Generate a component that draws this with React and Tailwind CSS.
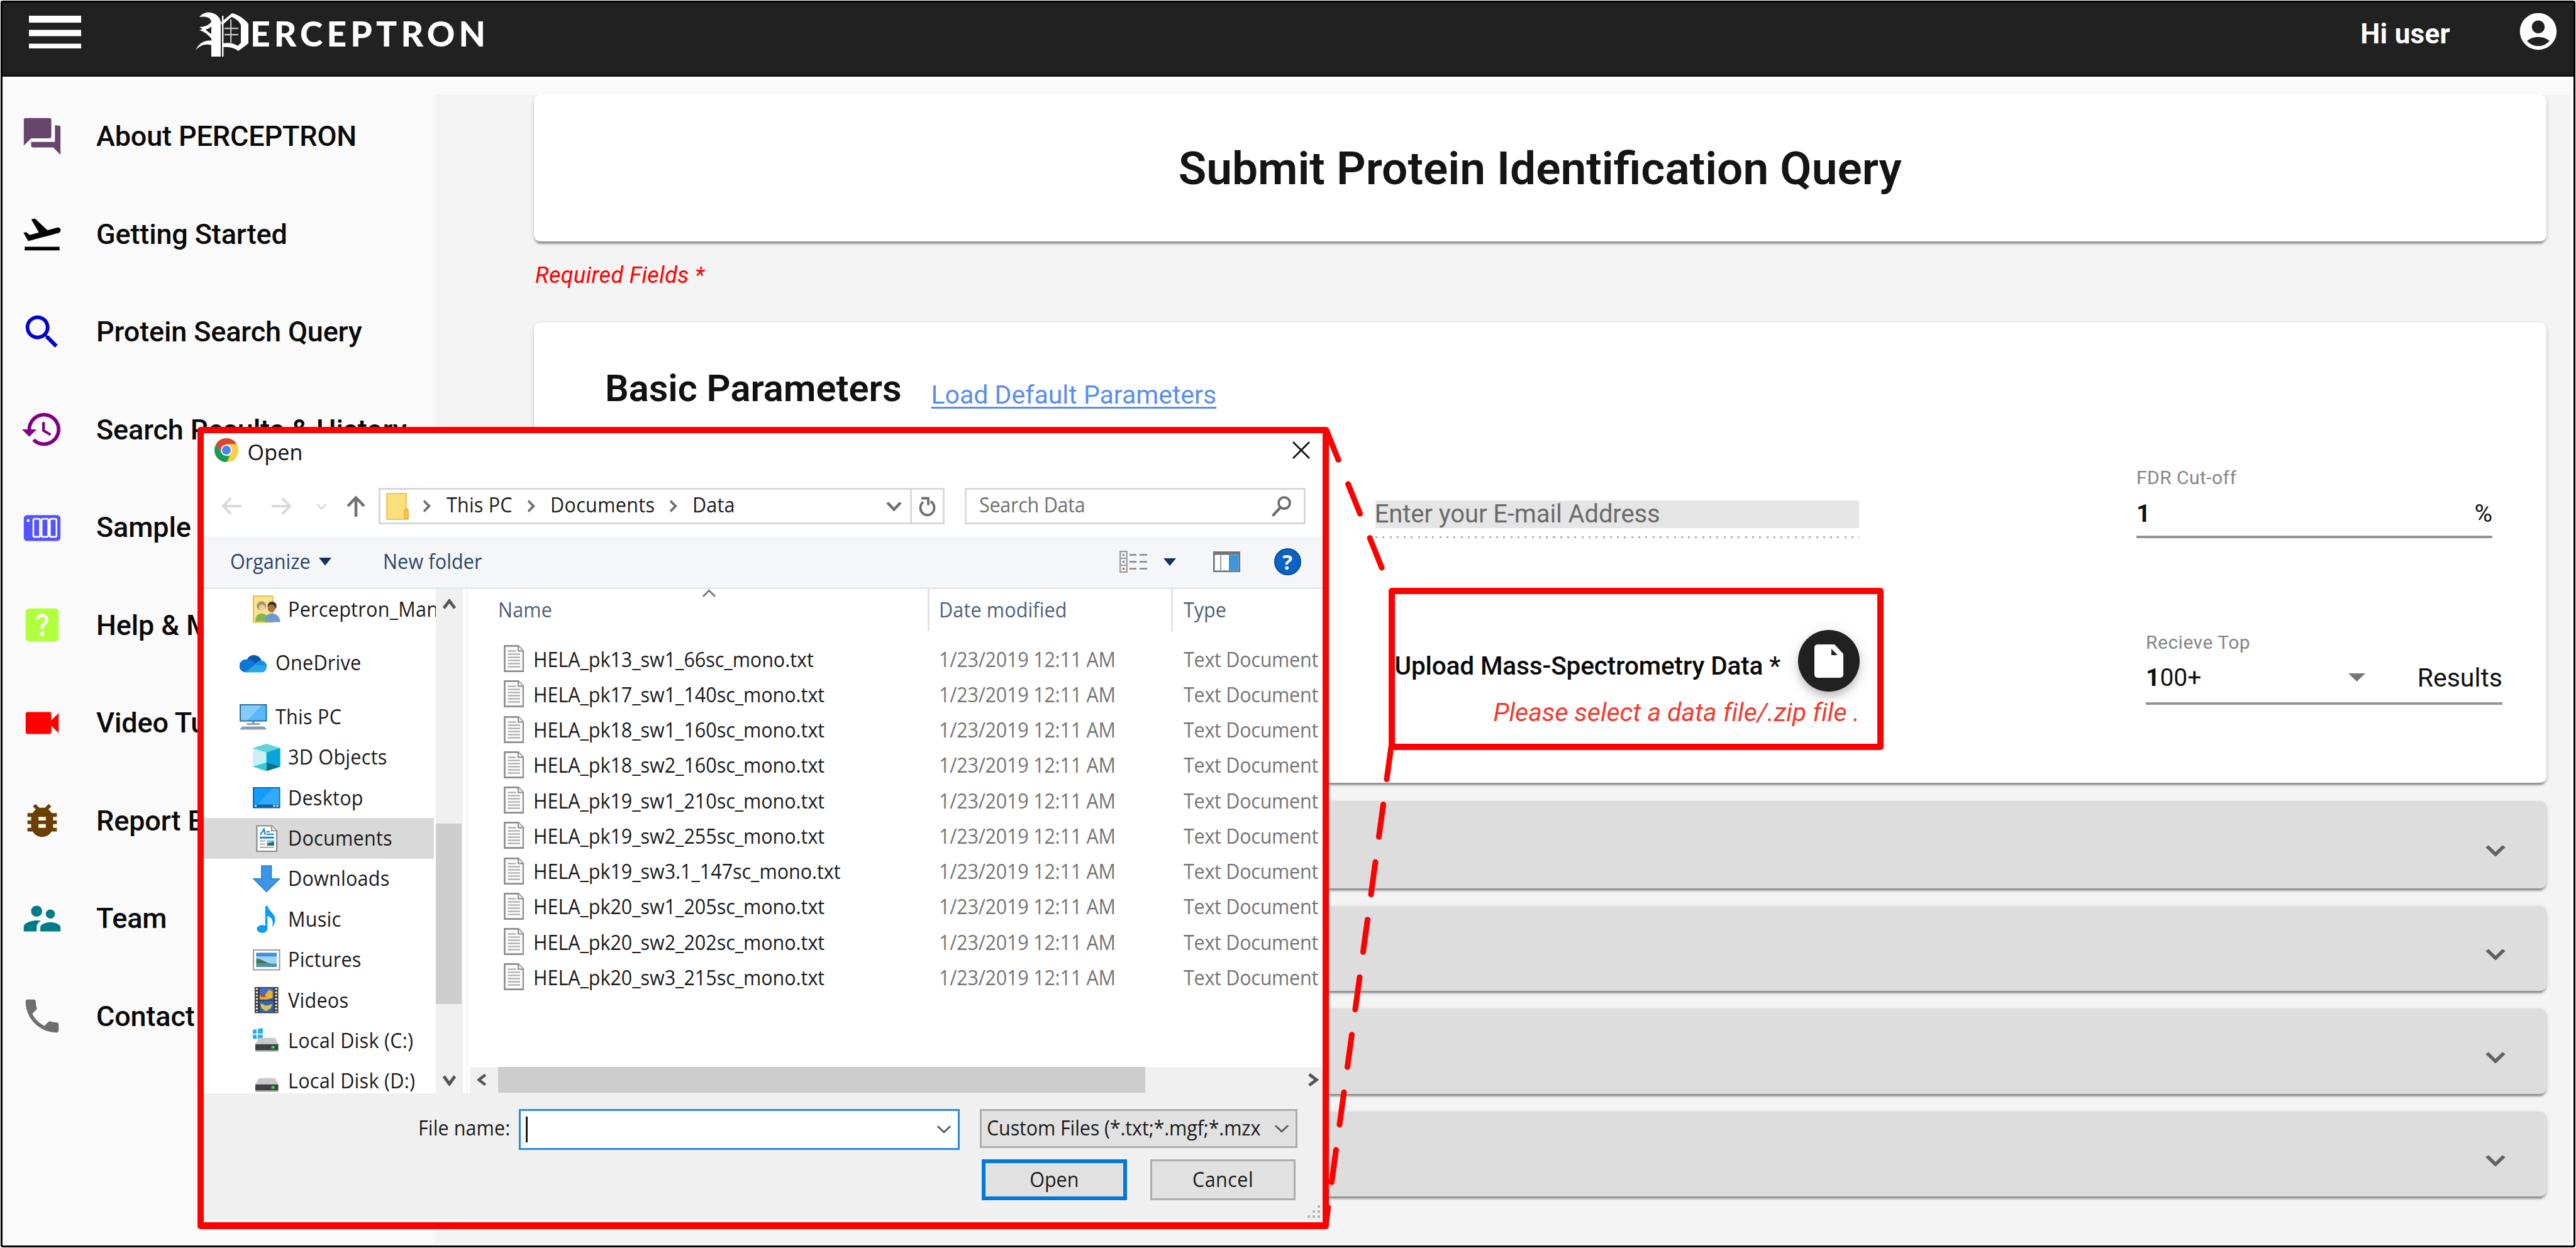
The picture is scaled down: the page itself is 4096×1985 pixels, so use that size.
import React from "react";
import {
  MdForum,
  MdFlightTakeoff,
  MdSearch,
  MdHistory,
  MdHelpCenter,
  MdVideocam,
  MdBugReport,
  MdSupervisorAccount,
  MdPhone,
  MdAccountCircle,
} from "react-icons/md";

const ROBOTO = "font-[Roboto,sans-serif] whitespace-pre";
const SEGOE_BASE =
  "inline-block scale-x-[0.925] pt-[2px] font-['Open_Sans',sans-serif] text-[33px] leading-[44px] whitespace-pre";
const SEGOE = `${SEGOE_BASE} origin-left`;
const CARD_SHADOW =
  "shadow-[0_8px_3px_-5px_rgba(0,0,0,0.24),0_4px_3px_0_rgba(0,0,0,0.18),0_2px_9px_0_rgba(0,0,0,0.12)]";

/* ---------- generic glyphs ---------- */

function Chevron({ className, dir = "down", stroke = 4 }) {
  const d = {
    down: "M2 4 L12 17 L22 4",
    up: "M2 17 L12 4 L22 17",
    right: "M5 2 L18 12 L5 22",
    left: "M18 2 L5 12 L18 22",
  }[dir];
  const vertical = dir === "left" || dir === "right";
  return (
    <svg className={className} viewBox={vertical ? "2 0 20 24" : "0 1 24 19"} preserveAspectRatio="none" fill="none" stroke="currentColor" strokeWidth={stroke}>
      <path d={d} />
    </svg>
  );
}

function Triangle({ className }) {
  return (
    <svg className={className} viewBox="0 0 20 12" preserveAspectRatio="none" fill="currentColor">
      <path d="M0 0h20L10 12z" />
    </svg>
  );
}

/* ---------- header ---------- */

function Emblem() {
  return (
    <svg className="ml-[182px] mt-[15px] h-[72px] w-[84px] shrink-0" viewBox="0 0 84 72" fill="#fff">
      <path d="M6 8C12 0 22-1 30 3c6 3 10 8 10 14v54H25V17c0-7-6-11-19-9z" />
      <path d="M42 6h2.4v65H42z" />
      <path d="M25 16c-4 5-11 8-19 8l5 3-5 2c8 2 13 7 19 13v-7c-4-2-7-5-9-7 4-1 7-3 9-5z" />
      <path d="M0 61c5-11 15-17 26-15v7c-10-3-18-1-26 8z" />
      <path d="M40 17L58 2c10 2 20 9 26 17v31L68 62c-7-5-15-7-24-6v-6c9-2 17 0 23 4l5-5V21c-3-7-9-11-15-13L42 21z" />
      <path d="M46 25h22v2.2H46zM46 35h22v2.2H46zM55 12h2.2v37H55z" opacity=".75" />
    </svg>
  );
}

function Header() {
  return (
    <header className="flex h-[118px] shrink-0 items-start border-b-[4px] border-[#141414] bg-[#212121] text-white">
      <svg className="ml-[42px] mt-[21px] h-[52px] w-[83px] shrink-0" viewBox="0 0 83 52" fill="#fff">
        <path d="M0 0h83v11H0zM0 22.5h83v10H0zM0 44.5h83v7.5H0z" />
      </svg>
      <Emblem />
      <span className="ml-[3px] mt-[19px] whitespace-pre font-[Lato,sans-serif] text-[55px] font-black leading-[60px] tracking-[6.2px]">
        ERCEPTRON
      </span>
      <span className={`${ROBOTO} ml-auto mr-[105px] mt-[20px] text-[44px] font-bold leading-[60px] tracking-[0.3px]`}>Hi user</span>
      <MdAccountCircle className="mr-[21px] mt-[11px] size-[70px] shrink-0" />
    </header>
  );
}

/* ---------- sidebar ---------- */

function SampleIcon({ className }) {
  return (
    <svg className={className} viewBox="0 0 24 24">
      <rect x="2" y="5.2" width="20" height="14.2" rx="1.8" fill="#5353ff" />
      <circle cx="4.4" cy="8.2" r=".8" fill="#fff" />
      <g fill="none" stroke="#fff" strokeWidth=".9">
        <rect x="7.2" y="7.3" width="3.6" height="9.8" rx=".6" />
        <rect x="11.7" y="7.3" width="3.6" height="9.8" rx=".6" />
        <rect x="16.2" y="7.3" width="3.6" height="9.8" rx=".6" />
      </g>
    </svg>
  );
}

const NAV = [
  { label: "About PERCEPTRON", icon: MdForum, color: "text-[#67466b]" },
  { label: "Getting Started", icon: MdFlightTakeoff, color: "text-black" },
  { label: "Protein Search Query", icon: MdSearch, color: "text-[#0000cd]" },
  { label: "Search Results & History", icon: MdHistory, color: "text-[#800080]" },
  { label: "Sample Data", icon: SampleIcon, color: "text-[#5353ff]" },
  { label: "Help & Manual", icon: MdHelpCenter, color: "text-[#b2ff3f]" },
  { label: "Video Tutorials", icon: MdVideocam, color: "text-[#ff0000]" },
  { label: "Report Bug", icon: MdBugReport, color: "text-[#6b3f00]" },
  { label: "Team", icon: MdSupervisorAccount, color: "text-[#007c89]" },
  { label: "Contact", icon: MdPhone, color: "text-[#6e6e6e]" },
];

function Sidebar() {
  return (
    <nav className="-mt-[12px] flex w-[688px] shrink-0 flex-col">
      {NAV.map(({ label, icon: Icon, color }) => (
        <div key={label} className="flex h-[155.5px] shrink-0 items-center gap-[51px] pl-[28px]">
          <Icon className={`size-[70px] shrink-0 ${color}`} />
          <span className={`${ROBOTO} mt-[1px] text-[45px] font-medium leading-[60px] tracking-[-0.15px] text-[#0a0a0a]`}>{label}</span>
        </div>
      ))}
    </nav>
  );
}

/* ---------- form ---------- */

function BasicParameters() {
  return (
    <section className={`mt-[55px] flex h-[732px] w-[3199.5px] shrink-0 flex-col rounded-[10px] bg-white ${CARD_SHADOW}`}>
      <div className="mt-[70px] flex items-end pl-[113px]">
        <h2 className={`${ROBOTO} text-[59.5px] font-semibold leading-[70px] text-[#111]`}>Basic Parameters</h2>
        <a
          className={`${ROBOTO} ml-[47px] text-[41px] leading-[50px] text-[#5b8df0] underline decoration-[3px] underline-offset-[5px]`}
        >
          Load Default Parameters
        </a>
      </div>

      <div className="mt-[90px] flex items-start">
        <div className="ml-[1337.7px] mt-[52.7px] w-[769.3px]">
          <div className="h-[44px] bg-[#e5e5e5]">
            <span className={`${ROBOTO} -ml-[1px] block text-[40px] leading-[43px] tracking-[-0.1px] text-[#6b6b6b]`}>
              Enter your E-mail Address
            </span>
          </div>
          <div className="mt-[13px] h-[3px] bg-[repeating-linear-gradient(90deg,#b0b0b0_0px,#b0b0b0_3px,transparent_3px,transparent_11.3px)]" />
        </div>
        <div className="ml-[441px] w-[566px]">
          <div className={`${ROBOTO} text-[30px] leading-[34px] tracking-[0.45px] text-[#858585]`}>FDR Cut-off</div>
          <div className={`${ROBOTO} mt-[18px] flex justify-between text-[39px] leading-[44px] text-[#111]`}>
            <span className="font-bold">1</span>
            <span>%</span>
          </div>
          <div className="mt-[13px] h-[4px] bg-[#949494]" />
        </div>
      </div>

      <div className="mt-[146px] flex items-start">
        <div className="ml-[1368.5px] w-[739.5px]">
          <div className="flex items-start justify-between">
            <span className={`${ROBOTO} mt-[34px] text-[40.6px] font-medium leading-[46px] tracking-[-0.15px] text-[#0a0a0a]`}>
              Upload Mass-Spectrometry Data *
            </span>
            <span className="flex size-[98px] items-center justify-center rounded-full bg-[#212121] shadow-[0_9px_15px_-3px_rgba(0,0,0,0.25),0_3px_26px_0_rgba(0,0,0,0.1)]">
              <svg className="h-[53px] w-[46px]" viewBox="0 0 46 53">
                <path d="M5 0h27l14 15v33a5 5 0 0 1-5 5H5a5 5 0 0 1-5-5V5a5 5 0 0 1 5-5z" fill="#fff" />
                <path d="M27 7v10h10z" fill="#212121" />
              </svg>
            </span>
          </div>
          <div className={`${ROBOTO} mt-[10px] text-right text-[41px] italic leading-[46px] tracking-[-0.03px] text-[#f23a2f]`}>
            Please select a data file/.zip file .
          </div>
        </div>
        <div className="ml-[455px] mt-[2.5px] w-[567px]">
          <div className={`${ROBOTO} text-[30px] leading-[34px] tracking-[0.5px] text-[#858585]`}>Recieve Top</div>
          <div className={`${ROBOTO} mt-[17px] flex items-center text-[39px] leading-[44px] text-[#111]`}>
            <span className="font-bold">1</span>
            <span>00+</span>
            <Triangle className="ml-auto h-[13px] w-[27px] text-[#757575]" />
            <span className="ml-[83px] text-[41px]">Results</span>
          </div>
          <div className="mt-[17px] h-[4px] bg-[#949494]" />
        </div>
      </div>
    </section>
  );
}

function ClosedPanel({ first }) {
  return (
    <div
      className={`flex w-[3199.5px] shrink-0 items-center justify-end rounded-[10px] bg-[#ddd] pr-[65px] ${CARD_SHADOW} ${
        first ? "h-[139px]" : "h-[135.2px]"
      }`}
    >
      <Chevron className="mt-[19px] h-[19px] w-[32px] text-[#616161]" stroke={4.6} />
    </div>
  );
}

/* ---------- dialog icons ---------- */

function ChromeIcon() {
  return (
    <svg className="ml-[16.5px] mt-[8px] size-[38px] shrink-0" viewBox="0 0 48 48">
      <circle cx="24" cy="24" r="24" fill="#ffcd40" />
      <path d="M24 24L13.6 30 3.2 12A24 24 0 0 1 44.8 12H24z" fill="#db4437" />
      <path d="M3.2 12L13.6 30 24 36l-4 0L21 47.8A24 24 0 0 1 3.2 12z" fill="#0f9d58" />
      <path d="M13.6 30L24 36h10.4L24 48a24 24 0 0 1-3-.2z" fill="#0f9d58" />
      <path d="M34.4 30L24 48A24 24 0 0 0 44.8 12H24z" fill="#ffcd40" />
      <circle cx="24" cy="24" r="11.4" fill="#f1f1f1" />
      <circle cx="24" cy="24" r="8.8" fill="#4285f4" />
    </svg>
  );
}

function FolderIcon({ className }) {
  return (
    <svg className={className} viewBox="0 0 36 43">
      <path d="M1 1h31v26l3 2v13H1z" fill="#fbdf7c" stroke="#e6bb42" strokeWidth="1.6" />
      <path d="M29 28c3-6 6-3 6 1v12h-6z" fill="#efc653" stroke="#dfae2f" strokeWidth="1.2" />
    </svg>
  );
}

function TextFileIcon() {
  return (
    <svg className="h-[43px] w-[32.5px] shrink-0" viewBox="0 0 32.5 43">
      <path d="M1.4 1.4h21.8l7.9 8v32.2H1.4z" fill="#fcfcfc" stroke="#8c8c8c" strokeWidth="2.6" />
      <path d="M23 1.4v8h8" fill="#eee" stroke="#8c8c8c" strokeWidth="2" />
      <path d="M6.5 9.5h13M6.5 14.5h19.5M6.5 19.5h19.5M6.5 24.5h19.5M6.5 29.5h19.5M6.5 34.5h19.5" stroke="#a6a6a6" strokeWidth="1.9" />
    </svg>
  );
}

const ICON = "size-[43.5px] shrink-0";

function UserFolderIcon() {
  return (
    <svg className={ICON} viewBox="0 0 44 44">
      <path d="M1 1h31v42H1z" fill="#fbe38d" stroke="#e8c13d" strokeWidth="2" />
      <circle cx="14" cy="17" r="7.6" fill="#a99766" />
      <circle cx="15" cy="20" r="5" fill="#ecccae" />
      <path d="M4 42c0-9 4-13 10-13s11 4 11 13z" fill="#86b552" />
      <circle cx="31" cy="17" r="7.2" fill="#3c3430" />
      <circle cx="30" cy="21" r="6" fill="#b5713c" />
      <path d="M19 43c0-9 4-14 11-14 8 0 14 5 14 14z" fill="#6e98cf" />
    </svg>
  );
}

function OneDriveIcon() {
  return (
    <svg className={ICON} viewBox="0 0 44 44">
      <path d="M12 16a12 11 0 0 1 23 2l-15 8z" fill="#0a59b3" />
      <path d="M9 37a10.500 10.500 0 0 1 2-21c7-1 10 3 16 7L10 37z" fill="#0f76d3" />
      <path d="M8 37l18-13c3-5 8-7 11-5 9 4 8 16 0 18z" fill="#28a8ea" />
      <path d="M24 24l11-6c5 0 8 4 9 9z" fill="#1490df" />
    </svg>
  );
}

function PcIcon() {
  return (
    <svg className={ICON} viewBox="0 0 44 44">
      <rect x="1" y="2" width="42" height="26" fill="#55b9fb" stroke="#2d6f9e" strokeWidth="2" />
      <path d="M2 3h34L12 27H2z" fill="#8fd0fb" opacity=".8" />
      <path d="M20 29h4v3h-4zM11.500 31.500h21v3h-21zM4 37h36l4 5H0z" fill="#8b9fb2" />
    </svg>
  );
}

function CubeIcon() {
  return (
    <svg className={ICON} viewBox="0 0 44 44">
      <path d="M22 0l22 7v29l-22 8L0 36V7z" fill="#27c4d6" />
      <path d="M22 0l22 7-22 7L0 7z" fill="#62d3dd" />
      <path d="M0 7l22 7v16L0 37z" fill="#c9f1f4" />
      <path d="M22 14l22-7v30l-22-7z" fill="#08a5d8" />
      <path d="M22 30l22 7-22 7z" fill="#04708c" />
      <path d="M22 30L0 37l22 7z" fill="#35cbdb" />
    </svg>
  );
}

function DesktopIcon() {
  return (
    <svg className={ICON} viewBox="0 0 44 44">
      <rect x="1" y="6" width="42" height="32" fill="#149cfb" stroke="#0f6cb6" strokeWidth="2" />
      <path d="M32 7h10v26H8z" fill="#35a9fb" />
      <path d="M1 33h42v4.500H1z" fill="#0a5fa8" />
      <path d="M3 34h3v2.500H3zM33 34h3v2.500h-3zM38 34h3v2.500h-3z" fill="#fff" />
    </svg>
  );
}

function DocumentsIcon() {
  return (
    <svg className={ICON} viewBox="0 0 44 44">
      <path d="M6.500 1.500h24l8 8v33h-32z" fill="#fff" stroke="#8a8a8a" strokeWidth="2.200" />
      <path d="M30 1.500v8h8.500" fill="#eee" stroke="#8a8a8a" strokeWidth="1.800" />
      <path d="M12 16l6-9 2 9M22 11h5M22 15h12" stroke="#1c86d6" strokeWidth="2.400" fill="none" />
      <path d="M11 20.500h23" stroke="#1c86d6" strokeWidth="3" />
      <path d="M11 26h9M11 31h9M11 36h23" stroke="#9a9a9a" strokeWidth="1.800" />
      <path d="M23 24.500h11v9H23z" fill="#8cc6ee" />
      <path d="M23 33.500v-4l6-1 5-2v7z" fill="#2c6b4e" />
    </svg>
  );
}

function DownloadsIcon() {
  return (
    <svg className={ICON} viewBox="0 0 44 44">
      <path d="M14 1h16v21h13L22 43 1 22h13z" fill="#3a97e8" stroke="#2f7ec8" strokeWidth="1.500" />
    </svg>
  );
}

function MusicIcon() {
  return (
    <svg className={ICON} viewBox="0 0 44 44" fill="#0c9bf7">
      <ellipse cx="15" cy="37" rx="8.500" ry="6.500" />
      <path d="M20 0h4c1 8 12 12 12 22 0 5-2 9-5 12 3-9 0-15-7.500-18v21H20z" />
    </svg>
  );
}

function PicturesIcon() {
  return (
    <svg className={ICON} viewBox="0 0 44 44">
      <rect x="1" y="6" width="42" height="32" fill="#fff" stroke="#9a9a9a" strokeWidth="2" />
      <rect x="5.500" y="10.500" width="33" height="23" fill="#9fd2f5" />
      <path d="M5.500 10.500h33v6H5.500z" fill="#3f8fe0" />
      <path d="M5.500 20c9 0 13 6 24 8H5.500z" fill="#3e7d57" />
      <path d="M5.500 28h33v5.500h-33z" fill="#4d93a8" />
    </svg>
  );
}

function VideosIcon() {
  return (
    <svg className={ICON} viewBox="0 0 44 44">
      <rect x="3" y="1" width="38" height="42" fill="#3b3b3b" />
      <path d="M6.500 3v38M37.500 3v38" stroke="#f5f5f5" strokeWidth="3.200" strokeDasharray="2.600 2.600" />
      <rect x="11" y="2.500" width="22" height="18.500" fill="#3c6fd0" />
      <rect x="11" y="23" width="22" height="18.500" fill="#2d62c8" />
      <path d="M11 15l9-2 6-8 6 3v10l-8 3H11z" fill="#e2b52b" />
      <path d="M13 14l6-3 2 6h-8z" fill="#ca3c3c" />
      <path d="M12 27l10 4 10-3-4 8-7 4-7-5z" fill="#e8c23a" />
    </svg>
  );
}

function DiskIcon({ windows }) {
  return (
    <svg className={ICON} viewBox="0 0 44 44">
      {windows && <path d="M0 4l6-1v7H0zM8 2.500L16 1v9H8zM0 12h6v7l-6-1zM8 12h8v8l-8-1z" fill="#1fb1ef" />}
      <path d="M10 17h26l5 10H4z" fill="#c9c9cb" />
      <path d="M4 27h37v10H4z" fill="#3f4144" />
      <path d="M4 37h37v2H4z" fill="#9b9b9b" />
      <path d="M30 30h5v4h-5z" fill="#3be04a" />
    </svg>
  );
}

/* ---------- dialog ---------- */

const Crumb = () => <Chevron dir="right" className="h-[20px] w-[13px] shrink-0 text-[#6f6f6f]" stroke={5} />;

function NavigationBar() {
  return (
    <div className="flex h-[58px] shrink-0 items-center pl-[28px]">
      <svg className="h-[28px] w-[32px] shrink-0" viewBox="0 0 32 28" fill="none" stroke="#dadada" strokeWidth="4">
        <path d="M15 1.500L3 14l12 12.500M3 14h29" />
      </svg>
      <svg className="ml-[48px] h-[28px] w-[32px] shrink-0" viewBox="0 0 32 28" fill="none" stroke="#dadada" strokeWidth="4">
        <path d="M17 1.500L29 14 17 26.500M29 14H0" />
      </svg>
      <Chevron className="ml-[39px] h-[11px] w-[17px] shrink-0 text-[#dadada]" stroke={4.5} />
      <svg className="ml-[31px] h-[34px] w-[30px] shrink-0" viewBox="0 0 30 34" fill="none" stroke="#757575" strokeWidth="4.600">
        <path d="M2 17L15 3.500 28 17M15 4v30" />
      </svg>
      <div className="ml-[21px] flex h-full w-[899.5px] shrink-0 items-center border-[3px] border-[#d9d9d9] text-[#1c1c1c]">
        <FolderIcon className="ml-[9px] mr-[22px] h-[43px] w-[36px] shrink-0" />
        <Crumb />
        <span className={`${SEGOE} mb-[6px] ml-[25px] w-[104px] tracking-[0.2px]`}>This PC</span>
        <span className="w-[24px]" />
        <Crumb />
        <span className={`${SEGOE} mb-[6px] ml-[24px] w-[166px] tracking-[0.35px]`}>Documents</span>
        <span className="w-[23px]" />
        <Crumb />
        <span className={`${SEGOE} mb-[6px] ml-[24px] tracking-[0.2px]`}>Data</span>
        <Chevron className="ml-auto mr-[13px] h-[16px] w-[25px] text-[#707070]" stroke={4.6} />
        <div className="flex h-full w-[52px] items-center justify-center border-l-[3px] border-[#d9d9d9]">
          <svg className="h-[31px] w-[29px]" viewBox="0 0 29 31" fill="none" stroke="#707070" strokeWidth="3.800">
            <path d="M19.500 7.500A11 11.500 0 1 1 8 8.500" />
            <path d="M5 2.500h11v11" />
          </svg>
        </div>
      </div>
      <div className="ml-[32.5px] flex h-full w-[542px] shrink-0 items-center justify-between border-[3px] border-[#d9d9d9] pl-[20px] pr-[20px]">
        <span className={`${SEGOE} mb-[6px] tracking-[-0.3px] text-[#707070]`}>Search Data</span>
        <svg className="h-[33px] w-[31px]" viewBox="0 0 31 33" fill="none" stroke="#6b6b6b">
          <circle cx="20" cy="11" r="9" strokeWidth="3.600" />
          <path d="M14 18L1.500 31.500" strokeWidth="4.200" />
        </svg>
      </div>
    </div>
  );
}

function Toolbar() {
  return (
    <div className="mt-[19px] flex h-[84px] shrink-0 items-center border-b-[3px] border-[#e6e8ea] bg-[#f4f6f8] pl-[42px] pr-[34.5px] text-[#2c4468]">
      <span className={`${SEGOE} mb-[3px] w-[126px] shrink-0`}>Organize</span>
      <Triangle className="ml-[15px] h-[12.5px] w-[20px] shrink-0 text-[#12315c]" />
      <span className={`${SEGOE} mb-[3px] ml-[82px] tracking-[0.15px]`}>New folder</span>
      <svg className="ml-auto h-[35px] w-[44px]" viewBox="0 0 44 35" fill="none">
        <path d="M1.200 1.200h10.500v32.600H1.200zM1.200 12h10.500M1.200 23h10.500" stroke="#9a9a9a" strokeWidth="2.200" />
        <path d="M16 6.500h11M32 6.500h12M16 17.500h11M32 17.500h12M16 28.500h11M32 28.500h12" stroke="#858585" strokeWidth="2.600" />
        <path d="M5 5.500h3v3H5z" fill="#6f8f8a" />
        <path d="M5 16h3v3H5z" fill="#3b8fe8" />
        <path d="M5 27h3v3H5z" fill="#e04434" />
      </svg>
      <Triangle className="ml-[26px] h-[12px] w-[20px] text-[#12315c]" />
      <svg className="ml-[59px] h-[33px] w-[43px]" viewBox="0 0 43 33">
        <rect x="1.300" y="1.300" width="40.400" height="30.400" fill="#fff" stroke="#6f7479" strokeWidth="2.600" />
        <path d="M1 1h41v4.500H1z" fill="#6f7479" />
        <path d="M12 5v27" stroke="#9aa0a6" strokeWidth="2" />
        <path d="M25 5.500h15.500v25H25z" fill="#3b96e0" />
      </svg>
      <span className="ml-[53.5px] flex size-[43px] items-center justify-center rounded-full border-[2.5px] border-[#0d4f94] bg-[#0a63c4] font-['Open_Sans',sans-serif] text-[33px] font-bold leading-none text-white">
        ?
      </span>
    </div>
  );
}

const TREE = [
  { label: "Perceptron_Man", icon: <UserFolderIcon />, gap: true },
  { label: "OneDrive", icon: <OneDriveIcon />, root: true, gap: true },
  { label: "This PC", icon: <PcIcon />, root: true },
  { label: "3D Objects", icon: <CubeIcon /> },
  { label: "Desktop", icon: <DesktopIcon /> },
  { label: "Documents", icon: <DocumentsIcon />, selected: true },
  { label: "Downloads", icon: <DownloadsIcon /> },
  { label: "Music", icon: <MusicIcon /> },
  { label: "Pictures", icon: <PicturesIcon /> },
  { label: "Videos", icon: <VideosIcon /> },
  { label: "Local Disk (C:)", icon: <DiskIcon windows /> },
  { label: "Local Disk (D:)", icon: <DiskIcon /> },
];

function FolderTree() {
  return (
    <div className="flex w-[368.5px] shrink-0 flex-col overflow-hidden">
      {TREE.map(({ label, icon, root, gap, selected }) => (
        <div
          key={label}
          className={`flex h-[64.4px] w-[366px] shrink-0 items-center ${
            root ? "gap-[13.5px] pl-[57px]" : "gap-[12.5px] pl-[78px]"
          } ${gap ? "mb-[21.2px]" : ""} ${selected ? "bg-[#d9d9d9]" : ""}`}
        >
          {icon}
          <span className={`${SEGOE} mb-[3px] tracking-[0.3px] text-[#1a1a1a]`}>{label}</span>
        </div>
      ))}
    </div>
  );
}

const FILES = [
  "HELA_pk13_sw1_66sc_mono.txt",
  "HELA_pk17_sw1_140sc_mono.txt",
  "HELA_pk18_sw1_160sc_mono.txt",
  "HELA_pk18_sw2_160sc_mono.txt",
  "HELA_pk19_sw1_210sc_mono.txt",
  "HELA_pk19_sw2_255sc_mono.txt",
  "HELA_pk19_sw3.1_147sc_mono.txt",
  "HELA_pk20_sw1_205sc_mono.txt",
  "HELA_pk20_sw2_202sc_mono.txt",
  "HELA_pk20_sw3_215sc_mono.txt",
];

function FileList() {
  return (
    <div className="flex min-w-0 flex-1 flex-col overflow-hidden">
      <div className="relative flex h-[66.5px] shrink-0 text-[#4c607a]">
        <Chevron dir="up" className="absolute left-[369px] top-0 h-[14px] w-[23px] text-[#7a7a7a]" stroke={3.4} />
        <div className="flex w-[731px] shrink-0 items-center border-r-[3px] border-[#e2e2e2] pl-[45px]">
          <span className={`${SEGOE} mb-[2px] tracking-[0.2px]`}>Name</span>
        </div>
        <div className="flex w-[387px] shrink-0 items-center border-r-[3px] border-[#e2e2e2] pl-[15px]">
          <span className={`${SEGOE} mb-[2px] tracking-[0.15px]`}>Date modified</span>
        </div>
        <div className="flex items-center pl-[17px]">
          <span className={`${SEGOE} mb-[2px]`}>Type</span>
        </div>
      </div>
      <div className="mt-[16px] flex flex-col">
        {FILES.map((name) => (
          <div key={name} className="flex h-[56.25px] items-center">
            <div className="flex w-[731px] shrink-0 items-center gap-[15px] pl-[53.5px]">
              <TextFileIcon />
              <span className={`${SEGOE} tracking-[-0.05px] text-[#1a1a1a]`}>{name}</span>
            </div>
            <div className="w-[387px] shrink-0 pl-[15px]">
              <span className={`${SEGOE} tracking-[-0.25px] text-[#757575]`}>1/23/2019 12:11 AM</span>
            </div>
            <div className="w-[232px] shrink-0 pl-[17px]">
              <span className={`${SEGOE} tracking-[-0.3px] text-[#757575]`}>Text Document</span>
            </div>
          </div>
        ))}
      </div>
      <div className="mt-auto flex h-[42px] shrink-0 items-center bg-[#f0f0f0] pb-[1.500px]">
        <Chevron dir="left" className="ml-[12px] h-[19px] w-[16px] shrink-0 text-[#555]" stroke={5.5} />
        <div className="ml-[17px] h-full w-[1029px] shrink-0 bg-[#cdcdcd]" />
        <Chevron dir="right" className="ml-auto mr-[6px] h-[21px] w-[18px] shrink-0 text-[#555]" stroke={5.5} />
      </div>
    </div>
  );
}

function DialogFooter() {
  return (
    <div className="relative min-h-0 flex-1 border-b-[3px] border-white bg-[#f0f0f0] text-[#1a1a1a]">
      <div className="mt-[25px] flex items-start">
        <span className={`${SEGOE} ml-[341px] mt-[6px] w-[160px] shrink-0 tracking-[0.1px]`}>File name:</span>
        <div className="flex h-[64.5px] w-[701px] shrink-0 items-center border-[3px] border-[#2a8ad9] bg-white pl-[7.500px] pr-[10px]">
          <span className="h-[41px] w-[3px] bg-[#1a1a1a]" />
          <Chevron className="ml-auto h-[14px] w-[24px] text-[#5c5c5c]" stroke={3.2} />
        </div>
        <div className="ml-[32px] flex h-[61.5px] w-[505px] shrink-0 items-center border-[3px] border-[#adadad] bg-[#e1e1e1] pl-[8px] pr-[10px]">
          <span className={`${SEGOE} mb-[3px] w-[440px] shrink-0 tracking-[-0.15px]`}>Custom Files (*.txt;*.mgf;*.mzx</span>
          <Chevron className="ml-auto h-[14px] w-[24px] shrink-0 text-[#5c5c5c]" stroke={3.2} />
        </div>
      </div>
      <div className="mt-[15.5px] flex">
        <div className="ml-[1236.5px] flex h-[64.5px] w-[231px] shrink-0 items-center justify-center border-[6px] border-[#0078d7] bg-[#e1e1e1]">
          <span className={`${SEGOE_BASE} mb-[3px]`}>Open</span>
        </div>
        <div className="ml-[37.5px] flex h-[64.5px] w-[231px] shrink-0 items-center justify-center border-[3px] border-[#adadad] bg-[#e1e1e1]">
          <span className={`${SEGOE_BASE} mb-[3px] tracking-[0.5px]`}>Cancel</span>
        </div>
      </div>
      <svg className="absolute bottom-[3px] right-[3px] size-[21px]" viewBox="0 0 21 21" fill="#b5b5b5">
        <path d="M16 0h4v4h-4zM8 8h4v4H8zM16 8h4v4h-4zM0 16h4v4H0zM8 16h4v4H8zM16 16h4v4h-4z" />
      </svg>
    </div>
  );
}

function OpenDialog() {
  return (
    <div className="absolute left-[314px] top-[679px] flex h-[1275.5px] w-[1799px] flex-col rounded-[5px] border-[10px] border-b-[11px] border-[#ff0000] bg-white">
      <div className="flex h-[87px] shrink-0 items-start">
        <ChromeIcon />
        <span className="ml-[15px] mt-[8px] whitespace-pre font-['Open_Sans',sans-serif] text-[34px] leading-[44px] tracking-[0.2px] text-[#111]">
          Open
        </span>
        <svg className="ml-auto mr-[20px] mt-[13px] size-[28px]" viewBox="0 0 28 28" stroke="#111" strokeWidth="2.800">
          <path d="M1 1l26 26M27 1L1 27" />
        </svg>
      </div>
      <NavigationBar />
      <Toolbar />
      <div className="flex h-[802px] shrink-0">
        <FolderTree />
        <div className="flex w-[43px] shrink-0 flex-col items-center bg-[#f0f0f0]">
          <Chevron dir="up" className="mt-[16px] h-[17px] w-[21px] shrink-0 text-[#555]" stroke={5.5} />
          <div className="mt-[340px] h-[287px] w-full shrink-0 border-r-[2px] border-[#f0f0f0] bg-[#cdcdcd]" />
          <Chevron className="mb-[12px] mt-auto h-[18px] w-[21px] shrink-0 text-[#555]" stroke={5.5} />
        </div>
        <div className="mr-[3px] w-[8.500px] shrink-0 border-r-[2px] border-[#f2f2f2]" />
        <FileList />
      </div>
      <DialogFooter />
    </div>
  );
}

/* ---------- call-out marks ---------- */

function Callout() {
  return (
    <>
      <div className="absolute left-[2207.5px] top-[935px] h-[257.5px] w-[787.5px] rounded-[5px] border-[10px] border-[#ff0000]" />
      <svg className="absolute left-[2090px] top-[670px] h-[1300px] w-[140px]" viewBox="2090 670 140 1300" fill="none" stroke="#ff0000" strokeWidth="9" strokeLinecap="round">
        <path d="M2109 684L2212 940" strokeDasharray="51 41.500" />
        <path d="M2212 1188L2108 1949" strokeDasharray="52 40.400" />
      </svg>
    </>
  );
}

export default function App() {
  return (
    <div className="relative h-[1985px] w-[4096px] overflow-hidden bg-white p-[1px]">
      <div className="flex h-[1983px] w-[4094px] flex-col rounded-[3px] border-[3px] border-black bg-white">
        <Header />
        <div className="mr-[4px] mt-[5px] flex min-h-0 flex-1 flex-col bg-[#fafafa] pt-[24px]">
          <div className="mb-[4px] flex min-h-0 flex-1">
            <Sidebar />
            <main className="flex min-w-0 flex-1 flex-col bg-[#f4f4f4] pl-[157px]">
              <section className={`flex h-[232.5px] w-[3199.5px] shrink-0 items-center justify-center rounded-[10px] bg-white pt-[2px] [clip-path:inset(0_-20px_-20px_-20px)] ${CARD_SHADOW}`}>
                <h1 className={`${ROBOTO} text-[73px] font-semibold leading-[80px] text-[#141414]`}>Submit Protein Identification Query</h1>
              </section>
              <p className={`${ROBOTO} ml-[2px] mt-[34.5px] text-[36px] italic leading-[40px] tracking-[0.4px] text-[#ff0000]`}>
                Required Fields *
              </p>
              <BasicParameters />
              <div className="mt-[28.5px] flex flex-col gap-[28.4px]">
                <ClosedPanel first />
                <ClosedPanel />
                <ClosedPanel />
                <ClosedPanel />
              </div>
            </main>
          </div>
        </div>
      </div>
      <OpenDialog />
      <Callout />
    </div>
  );
}
